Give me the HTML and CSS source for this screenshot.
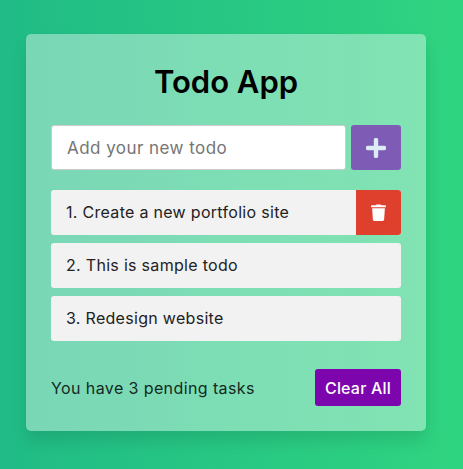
FILE: index.html
```html
<!DOCTYPE html>
<html lang="en">
<head>
  <meta charset="UTF-8" />
  <title>Todo App</title>
  <link rel="stylesheet" href="styles.css">
</head>
<body>
  <!-- Todo card -->
  <div class="wrapper">
    <h1>Todo App</h1>

    <div class="input-field">
      <input type="text" placeholder="Add your new todo">
      <button class="add-btn" aria-label="Add">
        <svg width="20" height="20" viewBox="0 0 20 20"><path d="M10 2v16M2 10h16" stroke="#dcecf4" stroke-width="4.4" stroke-linecap="round" fill="none"/></svg>
      </button>
    </div>

    <ul class="todo-list">
      <li>
        <span>1. Create a new portfolio site</span>
        <button class="delete-btn" aria-label="Delete">
          <svg width="15" height="17" viewBox="0 0 14 16"><path d="M4.6 1.2 5 .5h4l.4.7h4c.4 0 .6.3.6.6v.8c0 .3-.2.5-.5.5H.5a.5.5 0 0 1-.5-.5v-.8c0-.3.2-.6.6-.6zM1 4h12l-.7 10.6c0 .8-.7 1.4-1.4 1.4H3.100c-.7 0-1.4-.6-1.4-1.4z" fill="#fff"/></svg>
        </button>
      </li>
      <li><span>2. This is sample todo</span></li>
      <li><span>3. Redesign website</span></li>
    </ul>

    <div class="footer">
      <span>You have 3 pending tasks</span>
      <button class="clear-btn">Clear All</button>
    </div>
  </div>
</body>
</html>
```

FILE: styles.css
```css
* {
  padding: 0;
  margin: 0;
  box-sizing: border-box;
  font-family: "Inter", "Noto Sans", sans-serif;
}

body {
  height: 469px;
  overflow: hidden;
  padding: 34px 37px 0 26px;
  background: linear-gradient(to right, #20bb86, #2fd480);
}

.wrapper {
  width: 400px;
  height: 397px;
  padding: 25px;
  background: rgba(255, 255, 255, 0.4);
  border-radius: 5px;
  box-shadow: 0 10px 15px rgba(0, 0, 0, 0.1);
}

h1 {
  height: 48px;
  line-height: 46px;
  text-align: center;
  font-size: 31px;
  font-weight: 600;
  color: #000;
}

.input-field {
  display: flex;
  gap: 5px;
  margin-top: 18px;
  height: 45px;
}

.input-field input {
  width: 295px;
  height: 100%;
  padding: 0 15px;
  border: 1px solid #ccc;
  border-radius: 3px;
  font-size: 17px;
  letter-spacing: 0.45px;
  outline: none;
  background: #fff;
}

.input-field input::placeholder {
  color: #757575;
}

.add-btn {
  width: 50px;
  height: 100%;
  border: none;
  border-radius: 3px;
  background: #7e5bb5;
  display: flex;
  justify-content: center;
  align-items: center;
}

.todo-list {
  list-style: none;
  margin-top: 20px;
  display: flex;
  flex-direction: column;
  gap: 8px;
}

.todo-list li {
  height: 45px;
  display: flex;
  justify-content: space-between;
  align-items: center;
  background: #f2f2f2;
  border-radius: 3px;
  overflow: hidden;
  font-size: 16px;
  letter-spacing: 0.3px;
  color: #222;
}

.todo-list li span {
  padding: 0 0 2px 15px;
}

.delete-btn {
  width: 45px;
  height: 45px;
  border: none;
  background: #df3f2d;
  display: flex;
  justify-content: center;
  align-items: center;
}

.footer {
  margin-top: 28px;
  height: 37px;
  display: flex;
  justify-content: space-between;
  align-items: center;
  font-size: 16px;
  letter-spacing: 0.4px;
  color: #14291f;
}

.clear-btn {
  width: 86px;
  height: 37px;
  border: none;
  border-radius: 3px;
  background: #7c05ae;
  color: #fff;
  font-size: 16px;
  font-weight: 500;
  letter-spacing: 0.2px;
}
```
